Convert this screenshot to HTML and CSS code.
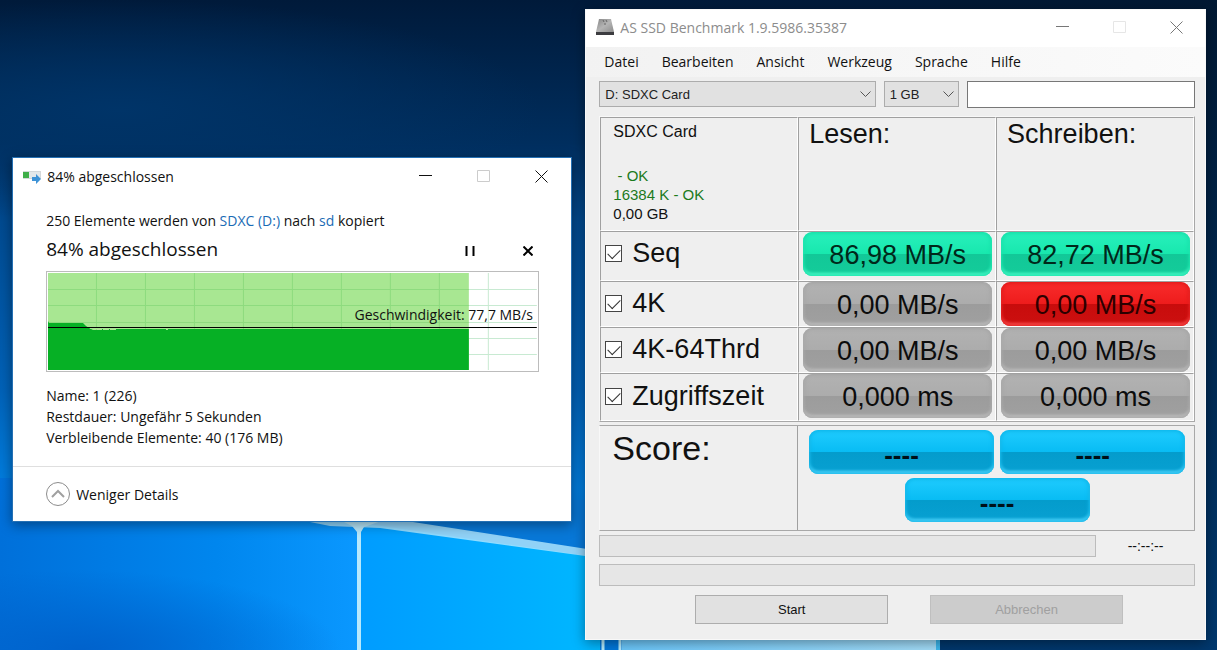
FILE: index.html
```html
<!DOCTYPE html>
<html lang="de">

<head>
  <title>AS SSD Benchmark</title>
  <meta charset="utf-8">
  <meta name="viewport" content="width=device-width, initial-scale=1">
  <link rel="stylesheet" href="styles.css">
</head>

<body>
  <!-- Wallpaper -->
  <svg class="wallpaper" viewBox="0 0 1217 650" preserveAspectRatio="none" aria-hidden="true">
    <defs>
      <linearGradient id="sky" x1="0" y1="0" x2="0" y2="1">
        <stop offset="0" stop-color="#001a3a" />
        <stop offset="0.22" stop-color="#002e5e" />
        <stop offset="0.34" stop-color="#004a90" />
        <stop offset="0.6" stop-color="#0062b8" />
        <stop offset="0.75" stop-color="#007ee0" />
        <stop offset="1" stop-color="#0068d0" />
      </linearGradient>
      <linearGradient id="edge" x1="0" y1="0" x2="0" y2="1">
        <stop offset="0" stop-color="#001833" />
        <stop offset="1" stop-color="#00386e" />
      </linearGradient>
      <linearGradient id="floor" x1="0" y1="0" x2="1" y2="0">
        <stop offset="0" stop-color="#0070da" />
        <stop offset="0.6" stop-color="#0086ee" />
        <stop offset="1" stop-color="#0a98ff" />
      </linearGradient>
      <linearGradient id="pane" x1="0" y1="0" x2="1" y2="0">
        <stop offset="0" stop-color="#009cff" />
        <stop offset="1" stop-color="#00b8ff" />
      </linearGradient>
      <linearGradient id="light" x1="0" y1="0" x2="1" y2="0">
        <stop offset="0" stop-color="#6cc8fc" />
        <stop offset="1" stop-color="#a4defa" />
      </linearGradient>
      <radialGradient id="top">
        <stop offset="0" stop-color="#003468" />
        <stop offset="1" stop-color="#003468" stop-opacity="0" />
      </radialGradient>
      <radialGradient id="haze">
        <stop offset="0" stop-color="#0062cc" />
        <stop offset="1" stop-color="#0062cc" stop-opacity="0" />
      </radialGradient>
    </defs>
    <rect width="1217" height="650" fill="url(#sky)" />
    <ellipse cx="120" cy="110" rx="420" ry="110" fill="url(#top)" />
    <rect x="0" y="478" width="360" height="172" fill="url(#floor)" />
    <ellipse cx="80" cy="650" rx="260" ry="80" fill="url(#haze)" />
    <path d="M300 500H600V560L362 524z" fill="#0878d8" />
    <path d="M361 523L602 558V650H361z" fill="url(#pane)" />
    <path d="M290 518L400 520L600 551V558L380 528L330 526z" fill="#b4e8ff" opacity="0.8" />
    <path d="M340 520H384L364 527L361 532V650H357V532L352 526z" fill="#b8e8fc" />
    <rect x="600" y="540" width="22" height="110" fill="#0078dc" />
    <path d="M603 630V650M620 630V650" stroke="#b4ecff" stroke-width="3" />
    <rect x="622" y="560" width="317" height="90" fill="url(#light)" />
    <rect x="936" y="560" width="4" height="90" fill="#3cb8ee" />
    <rect x="940" y="0" width="277" height="650" fill="url(#edge)" />
  </svg>

  <!-- Copy dialog -->
  <section class="window copy">
    <header class="titlebar">
      <svg class="title-icon" width="20" height="16" viewBox="0 0 20 16" aria-hidden="true">
        <rect x="1.500" y="2.500" width="17" height="7" fill="#e4e8ea" stroke="#d4d8da" />
        <rect x="1" y="3" width="6" height="6" fill="#3fae49" />
        <path d="M10 8h4V5l5 5-5 5v-3h-4z" fill="#3f93d6" />
      </svg>
      <h1>84% abgeschlossen</h1>
      <div class="captions">
        <button type="button" aria-label="Minimieren"><svg width="13" height="13"><path d="M0 5.500h13" /></svg></button>
        <button type="button" aria-label="Maximieren" disabled><svg width="13" height="13"><path d="M.5.5h12v11H.5z" /></svg></button>
        <button type="button" aria-label="Schließen"><svg width="13" height="13"><path d="M.5.5l12 12M12.500.5l-12 12" /></svg></button>
      </div>
    </header>
    <div class="copy-body">
      <p>250 Elemente werden von <a href="#">SDXC (D:)</a> nach <a href="#">sd</a> kopiert</p>
      <div class="status">
        <h2>84% abgeschlossen</h2>
        <button type="button" aria-label="Anhalten"><svg width="10" height="10"><path d="M1.500 0v10M8.500 0v10" /></svg></button>
        <button type="button" aria-label="Abbrechen"><svg width="10" height="10"><path d="M.5.5l9 9M9.500.5l-9 9" /></svg></button>
      </div>
      <!-- Speed graph -->
      <div class="graph">
        <svg viewBox="0 0 489 97" preserveAspectRatio="none" aria-hidden="true">
          <path class="lines" d="M0 16.500h489M0 32.500h489M0 49.500h489M0 65.500h489M0 81.500h489M48.500 0v97M97.500 0v97M146.500 0v97M195.500 0v97M244.500 0v97M293.500 0v97M342.500 0v97M391.500 0v97M440.500 0v97" />
          <rect class="done" width="421" height="97" />
          <path class="lines-done" d="M0 16.500h421M0 32.500h421M0 49.500h421M48.500 0v97M97.500 0v97M146.500 0v97M195.500 0v97M244.500 0v97M293.500 0v97M342.500 0v97M391.500 0v97" />
          <path class="speed" d="M0 48l1 2h34l3 3 3 2 4 2h9v-1h8v1h6v-1h50v1h2v-1h301v42H0z" />
          <path class="dips" d="M42 55.500h17M55 56.500h6M68 55.500h6M82 55.500h3M87 55.500h5M125 55.500h2" />
          <path class="average" d="M0 54.500h489" />
        </svg>
        <span class="graph-label">Geschwindigkeit: 77,7 MB/s</span>
      </div>
      <ul class="facts">
        <li>Name: 1 (226)</li>
        <li>Restdauer: Ungefähr 5 Sekunden</li>
        <li>Verbleibende Elemente: 40 (176 MB)</li>
      </ul>
    </div>
    <footer>
      <button type="button" class="details">
        <svg width="24" height="24" aria-hidden="true"><circle cx="12" cy="12" r="11.500" /><path d="M6 15l6-6 6 6" /></svg>
        Weniger Details
      </button>
    </footer>
  </section>

  <!-- Benchmark -->
  <section class="window bench">
    <header class="titlebar">
      <svg class="title-icon" width="20" height="18" viewBox="0 0 20 18" aria-hidden="true">
        <defs>
          <linearGradient id="metal" x1="0" y1="0" x2="1" y2="1">
            <stop offset="0" stop-color="#858585" />
            <stop offset="0.5" stop-color="#b4b4b4" />
            <stop offset="1" stop-color="#8c8c8c" />
          </linearGradient>
        </defs>
        <path d="M4 0h12l3 13H1z" fill="url(#metal)" />
        <path d="M1 13h18v3H1z" fill="#3c3c40" />
        <path d="M8 1l1 2M11 1l1 2M9 5h2" stroke="#666" />
      </svg>
      <h1>AS SSD Benchmark 1.9.5986.35387</h1>
      <div class="captions">
        <button type="button" aria-label="Minimieren"><svg width="13" height="13"><path d="M0 5.500h13" /></svg></button>
        <button type="button" aria-label="Maximieren" disabled><svg width="13" height="13"><path d="M.5.5h12v11H.5z" /></svg></button>
        <button type="button" aria-label="Schließen"><svg width="13" height="13"><path d="M.5.5l12 12M12.500.5l-12 12" /></svg></button>
      </div>
    </header>
    <nav class="menu">
      <a href="#">Datei</a>
      <a href="#">Bearbeiten</a>
      <a href="#">Ansicht</a>
      <a href="#">Werkzeug</a>
      <a href="#">Sprache</a>
      <a href="#">Hilfe</a>
    </nav>
    <div class="bench-body">
      <div class="toolbar">
        <div class="select">
          <select aria-label="Laufwerk">
            <option>D: SDXC Card</option>
          </select>
          <svg width="11" height="7" aria-hidden="true"><path d="M.5.5l5 5 5-5" /></svg>
        </div>
        <div class="select">
          <select aria-label="Testgröße">
            <option>1 GB</option>
          </select>
          <svg width="11" height="7" aria-hidden="true"><path d="M.5.5l5 5 5-5" /></svg>
        </div>
        <input class="filter" type="text" aria-label="Name">
      </div>

      <!-- Results -->
      <table class="results">
        <tr class="head">
          <td class="info">
            <p class="model">SDXC Card</p>
            <p class="ok">&nbsp;- OK</p>
            <p class="ok">16384 K - OK</p>
            <p>0,00 GB</p>
          </td>
          <th scope="col">Lesen:</th>
          <th scope="col">Schreiben:</th>
        </tr>
        <tr class="seq">
          <th scope="row"><label><input type="checkbox" checked>Seq</label></th>
          <td><div class="badge green">86,98 MB/s</div></td>
          <td><div class="badge green">82,72 MB/s</div></td>
        </tr>
        <tr>
          <th scope="row"><label><input type="checkbox" checked>4K</label></th>
          <td><div class="badge">0,00 MB/s</div></td>
          <td><div class="badge red">0,00 MB/s</div></td>
        </tr>
        <tr>
          <th scope="row"><label><input type="checkbox" checked>4K-64Thrd</label></th>
          <td><div class="badge">0,00 MB/s</div></td>
          <td><div class="badge">0,00 MB/s</div></td>
        </tr>
        <tr class="access">
          <th scope="row"><label><input type="checkbox" checked>Zugriffszeit</label></th>
          <td><div class="badge">0,000 ms</div></td>
          <td><div class="badge">0,000 ms</div></td>
        </tr>
      </table>

      <!-- Score -->
      <div class="score">
        <h2>Score:</h2>
        <div class="score-values">
          <div class="badge blue">----</div>
          <div class="badge blue">----</div>
          <div class="badge blue">----</div>
        </div>
      </div>

      <div class="progress-row">
        <progress value="0" max="100" aria-label="Test"></progress>
        <span>--:--:--</span>
      </div>
      <progress value="0" max="100" aria-label="Gesamt"></progress>
      <div class="actions">
        <button type="button">Start</button>
        <button type="button" disabled>Abbrechen</button>
      </div>
    </div>
  </section>
</body>

</html>
```
FILE: styles.css
```css
* {
  box-sizing: border-box;
}

body {
  margin: 0;
  min-height: 100vh;
  overflow: hidden;
  background-color: #002a58;
  font-family: "Open Sans", "Noto Sans", sans-serif;
  font-size: 14px;
  line-height: 21px;
  color: #111;
}

h1,
h2,
p,
ul {
  margin: 0;
  padding: 0;
  font-weight: normal;
}

a {
  text-decoration: none;
}

button {
  padding: 0;
  border: none;
  background: transparent;
  font: inherit;
  color: inherit;
}

svg {
  display: block;
  flex: none;
}

.wallpaper {
  position: absolute;
  width: 100%;
  height: 100%;
}

/* Windows on the desktop */
.window {
  position: absolute;
  box-shadow: 0 3px 12px rgba(0, 0, 0, 0.4);
}

.copy {
  left: 1%;
  top: 157px;
  width: 46%;
  background: #fff;
  border: 1px solid #2470b4;
}

.bench {
  right: 11px;
  top: 9px;
  width: 51%;
  background: #efefef;
  border: 1px solid #f8f8f8;
}

.titlebar {
  display: flex;
  align-items: center;
  height: 37px;
  padding-left: 9px;
  background: #fff;
}

.titlebar h1 {
  flex: 1;
  margin-left: 5px;
  font-size: 14px;
}

.captions {
  display: flex;
  align-self: stretch;
}

.captions button {
  display: flex;
  align-items: center;
  justify-content: center;
  width: 58px;
}

.captions svg {
  fill: none;
  stroke: #111;
}

.captions button:disabled svg {
  stroke: #ccc;
}

/* Copy dialog */
.copy-body {
  padding: 15px 32px 18px 33px;
}

.copy a {
  color: #1a6bb5;
}

.status {
  display: flex;
  align-items: center;
  height: 36px;
}

.status h2 {
  flex: 1;
  font-size: 19px;
}

.status button {
  display: flex;
  align-items: center;
  justify-content: center;
  width: 22px;
  height: 22px;
  margin-top: 4px;
}

.status button + button {
  margin-left: 36px;
}

.status svg {
  fill: none;
  stroke: #000;
  stroke-width: 2;
}

.graph {
  position: relative;
  height: 101px;
  padding: 1px;
  border: 1px solid #bcbcbc;
  margin-top: 4px;
}

.graph svg {
  width: 100%;
  height: 100%;
}

.lines {
  stroke: #c8ead2;
}

.done {
  fill: #a8e792;
}

.lines-done {
  fill: none;
  stroke: #8edb7e;
}

.speed {
  fill: #06b025;
}

.dips {
  stroke: #a8e792;
}

.average {
  stroke: #000;
}

.graph-label {
  position: absolute;
  right: 5px;
  bottom: 46px;
}

.facts {
  margin-top: 13px;
  list-style: none;
}

.copy footer {
  padding: 15px 33px;
  border-top: 1px solid #dfdfdf;
}

.details {
  display: flex;
  align-items: center;
  gap: 6px;
}

.details svg {
  fill: none;
  stroke: #8c8c8c;
}

.details path {
  stroke-width: 2;
  stroke: #a0a0a0;
}

/* Benchmark */
.bench .titlebar {
  padding-bottom: 2px;
}

.bench .titlebar h1 {
  color: #8c8c8c;
}

.bench .captions button {
  width: 57px;
}

.bench .captions svg {
  stroke: #777;
}

.bench .captions button:disabled svg {
  stroke: #e6e6e6;
}

.menu {
  display: flex;
  gap: 23px;
  height: 30px;
  padding: 4px 18px;
  background: linear-gradient(to right, #f2f2f2, #fbfbfb);
}

.menu a {
  color: #111;
}

.bench-body {
  padding: 4px 10px 15px 13px;
  font-family: "Liberation Sans", Arial, sans-serif;
}

.toolbar {
  display: grid;
  grid-template-columns: 277fr 75fr 229fr;
  gap: 8px;
}

.select {
  position: relative;
  height: 26px;
}

.select select {
  appearance: none;
  width: 100%;
  height: 100%;
  padding: 0 5px;
  border: 1px solid #acacac;
  border-radius: 0;
  background: #e1e1e1;
  font: 13px "Liberation Sans", Arial, sans-serif;
  color: #222;
}

.select svg {
  position: absolute;
  right: 5px;
  top: 10px;
  fill: none;
  stroke: #555;
  pointer-events: none;
}

.filter {
  min-width: 0;
  height: 27px;
  border: 1px solid #777;
  background: #fff;
}

.results {
  width: 100%;
  margin-top: 8px;
  border: 1px solid #f8f8f8;
  border-right-color: #a8a8a8;
  border-bottom-color: #a8a8a8;
  border-spacing: 0;
  table-layout: fixed;
}

.results th,
.results td {
  height: 46px;
  padding: 0 3px 2px 4px;
  border: 1px solid #fff;
  border-top-color: #a0a0a0;
  border-left-color: #a0a0a0;
  font-size: 27px;
  font-weight: normal;
  line-height: 32px;
  text-align: left;
}

.results td {
  padding-bottom: 0;
  vertical-align: top;
}

.results .seq th,
.results .seq td {
  height: 50px;
}

.results .seq th {
  padding-bottom: 6px;
}

.results .access th,
.results .access td {
  height: 48px;
}

.results .head th,
.results .head td {
  height: 114px;
  padding: 0 10px;
  vertical-align: top;
}

.results .head .info {
  padding: 4px 12px;
  font-size: 15px;
  line-height: 19px;
}

.info .model {
  margin-bottom: 25px;
  font-size: 16px;
}

.info .ok {
  color: #1c7a1c;
}

.results label {
  display: flex;
  align-items: center;
  gap: 10px;
}

.results input {
  appearance: none;
  width: 17px;
  height: 17px;
  margin: 0;
  border: 1px solid #444;
  background: #fff;
}

.results input:checked::after {
  content: "";
  display: block;
  width: 11px;
  height: 6px;
  margin: 3px 2px;
  border-left: 1px solid #333;
  border-bottom: 1px solid #333;
  transform: rotate(-45deg);
}

.badge {
  height: 44px;
  border-radius: 9px;
  background: linear-gradient(#b2b2b2, #acacac 50%, #9c9c9c 51%, #a0a0a0);
  box-shadow: inset 0 0 4px 1px #a2a2a2, inset 0 -3px 3px #c4c4c4;
  font-size: 27px;
  line-height: 47px;
  text-align: center;
  color: #0c0c0c;
}

.green {
  background: linear-gradient(#28f0bc, #18e8ae 50%, #12c898 51%, #14cc9a);
  box-shadow: inset 0 0 4px 1px #10dca4, inset 0 -3px 3px #58ffd0;
  color: #00281a;
}

.red {
  background: linear-gradient(#f82c2c, #ee1c1c 50%, #c80c0c 51%, #cc1010);
  box-shadow: inset 0 0 4px 1px #dc1414, inset 0 -3px 3px #ff5c5c;
  color: #2c0000;
}

.blue {
  background: linear-gradient(#20ccff, #08bcf4 50%, #049ccc 51%, #08a0d2);
  box-shadow: inset 0 0 4px 1px #08b0e4, inset 0 -3px 3px #60dcff;
  font-size: 26px;
  font-weight: bold;
  line-height: 50px;
  color: #001018;
}

.score {
  display: grid;
  grid-template-columns: 1fr 2fr;
  margin-top: 3px;
  border: 1px solid #a8a8a8;
  border-left-color: #f8f8f8;
}

.score h2 {
  padding: 2px 12px;
  border-right: 1px solid #a0a0a0;
  font-size: 34px;
  line-height: 40px;
}

.score-values {
  display: flex;
  flex-wrap: wrap;
  justify-content: center;
  gap: 4px 6px;
  padding: 4px 4px 8px 6px;
}

.score-values .badge {
  width: 48%;
}

progress {
  appearance: none;
  display: block;
  width: 100%;
  height: 22px;
  border: 1px solid #bcbcbc;
  background: #e6e6e6;
}

progress::-webkit-progress-bar {
  background: #e6e6e6;
}

.progress-row {
  display: flex;
  align-items: center;
  margin: 4px 0 7px;
}

.progress-row progress {
  flex: 5;
}

.progress-row span {
  flex: 1;
  text-align: center;
}

.actions {
  display: flex;
  gap: 42px;
  padding: 9px 72px 0 96px;
}

.actions button {
  flex: 1;
  height: 29px;
  border: 1px solid #adadad;
  background: #e1e1e1;
  font-size: 13px;
}

.actions button:disabled {
  border-color: #bfbfbf;
  background: #ccc;
  color: #a0a0a0;
}
```
